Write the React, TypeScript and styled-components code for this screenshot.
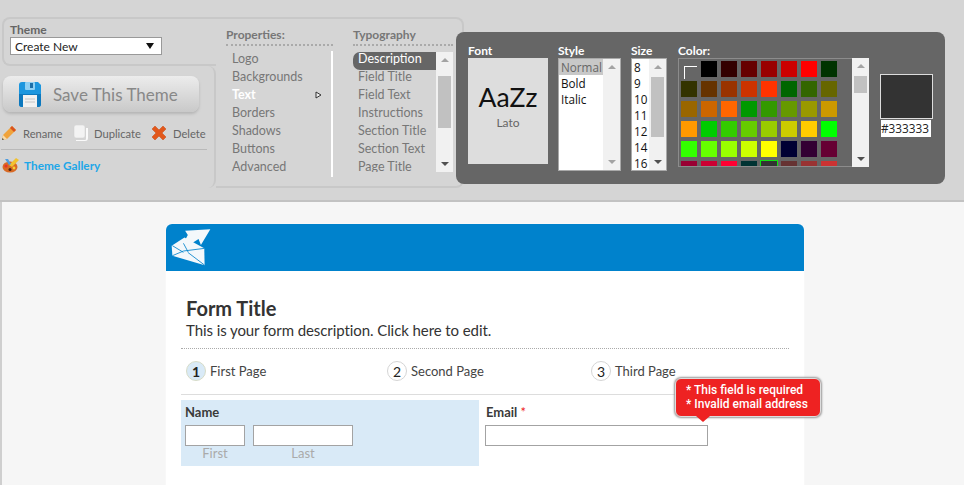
import React from "react";
import styled, { createGlobalStyle } from "styled-components";

const GlobalStyle = createGlobalStyle`
  html, body {
    margin: 0;
    padding: 0;
    height: 485px;
    overflow: hidden;
    background: #f6f6f6;
    font-family: "Lato", "Noto Sans", sans-serif;
  }
`;

const Toolbar = styled.div`
  display: flex;
  align-items: flex-start;
  box-sizing: border-box;
  height: 202px;
  padding: 17px 0 0 2px;
  background: #d5d5d5;
  border-bottom: 2px solid #c2c2c2;
`;

const LeftColumn = styled.div`
  width: 214px;
  flex: none;
`;

const ThemeBox = styled.div`
  box-sizing: border-box;
  height: 49px;
  padding: 4px 6px;
  border: 2px solid #c8c8c8;
  border-right: none;
  border-radius: 8px 0 0 8px;
`;

const ThemeLabel = styled.div`
  font-size: 12px;
  line-height: 13px;
  font-weight: 700;
  color: #666;
`;

const ThemeSelect = styled.div`
  display: flex;
  align-items: center;
  justify-content: space-between;
  box-sizing: border-box;
  width: 152px;
  height: 18px;
  margin-top: 1px;
  padding: 0 7px 0 4px;
  background: #fff;
  border: 1px solid #999;
  font-size: 12px;
  color: #222;
`;

const SelectArrow = styled.span`
  width: 0;
  height: 0;
  border-left: 4px solid transparent;
  border-right: 4px solid transparent;
  border-top: 6px solid #111;
`;

const SaveBox = styled.div`
  box-sizing: border-box;
  height: 122px;
  padding-top: 10px;
  border-right: 2px solid #c8c8c8;
  border-radius: 0 8px 8px 0;
`;

const SaveButton = styled.div`
  display: flex;
  align-items: center;
  box-sizing: border-box;
  width: 196px;
  height: 36px;
  margin-left: 1px;
  padding-left: 16px;
  gap: 12px;
  border-radius: 8px;
  background: linear-gradient(#ececec, #c9c9c9);
  box-shadow: 0 2px 3px #b5b5b5;
  font-size: 17px;
  color: #888;
`;

const ActionRow = styled.div`
  display: flex;
  align-items: center;
  width: 206px;
  height: 38px;
  margin-left: -1px;
  padding-top: 5px;
  box-sizing: border-box;
  border-bottom: 1px solid #b9b9b9;
`;

const ActionLink = styled.span<{ $width: number }>`
  display: flex;
  align-items: center;
  gap: 6px;
  width: ${(p) => p.$width}px;
  font-size: 11.2px;
  color: #666;
`;

const GalleryLink = styled.div`
  display: flex;
  align-items: center;
  gap: 4px;
  margin: 7px 0 0;
  font-size: 11.8px;
  font-weight: 700;
  color: #1ea7e8;
`;

const PropsPanel = styled.div`
  display: flex;
  gap: 20px;
  flex: none;
  box-sizing: border-box;
  width: 248px;
  height: 171px;
  padding: 8px 0 0 10px;
  border: 2px solid #c8c8c8;
  border-left: none;
  border-radius: 0 8px 8px 0;
`;

const PropsColumn = styled.div<{ $width: number }>`
  width: ${(p) => p.$width}px;
  flex: none;
`;

const ColumnTitle = styled.div`
  height: 15px;
  padding-bottom: 2px;
  border-bottom: 2px dotted #aaa;
  font-size: 12px;
  line-height: 15px;
  font-weight: 700;
  color: #777;
`;

const PropList = styled.div`
  box-sizing: border-box;
  height: 126px;
  margin-top: 5px;
  border-right: 2px solid #fff;
`;

const PropItem = styled.div<{ $active?: boolean }>`
  display: flex;
  align-items: center;
  justify-content: space-between;
  height: 18px;
  padding: 0 9px 3px 6px;
  box-sizing: border-box;
  font-size: 12.5px;
  font-weight: ${(p) => (p.$active ? 700 : 400)};
  color: ${(p) => (p.$active ? "#fff" : "#777")};
`;

const TypoBox = styled.div`
  display: flex;
  height: 120px;
  margin-top: 6px;
  overflow: hidden;
`;

const TypoList = styled.div`
  flex: 1;
  overflow: hidden;
`;

const TypoItem = styled.div<{ $active?: boolean }>`
  height: 18px;
  padding-left: 5px;
  box-sizing: border-box;
  font-size: 12.5px;
  line-height: 14px;
  color: ${(p) => (p.$active ? "#fff" : "#777")};
  background: ${(p) => (p.$active ? "#666" : "transparent")};
  border-radius: ${(p) => (p.$active ? "7px 0 0 7px" : "0")};
`;

const Track = styled.div`
  display: flex;
  flex-direction: column;
  flex: none;
  width: 17px;
  box-sizing: border-box;
  background: #f1f1f1;
`;

const TrackMiddle = styled.div<{ $offset: number }>`
  flex: 1;
  padding: ${(p) => p.$offset}px 2px 0;
`;

const Thumb = styled.div<{ $height: number }>`
  height: ${(p) => p.$height}px;
  background: #c1c1c1;
`;

const ArrowCell = styled.div`
  display: flex;
  align-items: center;
  justify-content: center;
  height: 16px;
  flex: none;
`;

const ArrowGlyph = styled.span<{ $down?: boolean; $muted?: boolean }>`
  width: 0;
  height: 0;
  border-left: 4px solid transparent;
  border-right: 4px solid transparent;
  ${(p) =>
    p.$down
      ? `border-top: 4px solid ${p.$muted ? "#a3a3a3" : "#505050"};`
      : `border-bottom: 4px solid ${p.$muted ? "#a3a3a3" : "#505050"};`}
`;

const DarkPanel = styled.div`
  display: flex;
  flex: none;
  box-sizing: border-box;
  width: 489px;
  height: 152px;
  margin: 15px 0 0 -8px;
  padding: 12px 12px 0;
  background: #666;
  border-radius: 8px;
`;

const DarkColumn = styled.div<{ $width: number; $gap: number }>`
  width: ${(p) => p.$width}px;
  margin-right: ${(p) => p.$gap}px;
  flex: none;
`;

const DarkLabel = styled.div`
  height: 14px;
  font-size: 12px;
  line-height: 14px;
  font-weight: 700;
  color: #fff;
`;

const FontPreview = styled.div`
  display: flex;
  flex-direction: column;
  align-items: center;
  box-sizing: border-box;
  height: 106px;
  padding-top: 24px;
  background: #ddd;
`;

const PreviewSample = styled.div`
  font-size: 26.5px;
  line-height: 30px;
  color: #111;
`;

const PreviewName = styled.div`
  margin-top: 3px;
  font-size: 12px;
  line-height: 15px;
  color: #666;
`;

const ListBox = styled.div`
  display: flex;
  box-sizing: border-box;
  height: 113px;
  background: #fff;
  border: 1px solid #a9a9a9;
  overflow: hidden;
`;

const Options = styled.div`
  flex: 1;
  min-width: 0;
  overflow: hidden;
`;

const Option = styled.div<{ $selected?: boolean }>`
  height: 16px;
  padding-left: 2px;
  font-family: "Open Sans", "Noto Sans", sans-serif;
  font-size: 11.7px;
  line-height: 16px;
  color: ${(p) => (p.$selected ? "#666" : "#111")};
  background: ${(p) => (p.$selected ? "#c8c8c8" : "transparent")};
`;

const ColorWrap = styled.div`
  display: flex;
  height: 109px;
  width: 191px;
`;

const ColorGrid = styled.div`
  display: grid;
  grid-template-columns: repeat(8, 16px);
  grid-auto-rows: 16px;
  gap: 4px;
  flex: 1;
  box-sizing: border-box;
  padding: 2px 0 0 2px;
  border: 1px solid #8c8c8c;
  border-right: none;
  overflow: hidden;
`;

const ColorCell = styled.div<{ $color: string; $selected?: boolean }>`
  box-sizing: border-box;
  background: ${(p) => p.$color};
  ${(p) => (p.$selected ? "outline: 1px solid #12e012;" : "")}
`;

const EmptyCell = styled.div`
  position: relative;
  &::before {
    content: "";
    position: absolute;
    right: 0;
    top: 5px;
    width: 12px;
    height: 12px;
    border-left: 1px solid #fff;
    border-top: 1px solid #fff;
  }
`;

const SwatchColumn = styled.div`
  width: 53px;
  flex: none;
  margin: 30px 0 0 11px;
`;

const Swatch = styled.div`
  box-sizing: border-box;
  height: 45px;
  background: #333;
  border: 1px solid #ddd;
`;

const HexBox = styled.div`
  width: 50px;
  height: 17px;
  margin: 1px 0 0 1px;
  background: #fff;
  font-family: "Open Sans", sans-serif;
  font-size: 11.8px;
  line-height: 17px;
  color: #222;
  white-space: nowrap;
  overflow: hidden;
`;

const Stage = styled.div`
  height: 283px;
  box-sizing: border-box;
  padding: 22px 0 0 164px;
  border-left: 2px solid #cfcfcf;
`;

const Form = styled.div`
  position: relative;
  width: 638px;
  height: 270px;
  background: #fff;
  border-radius: 6px 6px 0 0;
  box-shadow: 0 0 2px #fff;
`;

const FormHeader = styled.div`
  display: flex;
  align-items: center;
  box-sizing: border-box;
  height: 47px;
  padding-left: 4px;
  background: #0082cc;
  border-radius: 6px 6px 0 0;
`;

const FormBody = styled.div`
  padding: 25px 15px 0;
`;

const TitleBlock = styled.div`
  padding: 0 0 9px 5px;
  border-bottom: 1px dotted #aaa;
`;

const FormTitle = styled.div`
  font-size: 20px;
  line-height: 25px;
  font-weight: 700;
  color: #333;
`;

const FormDescription = styled.div`
  font-size: 15px;
  line-height: 18px;
  letter-spacing: -0.08px;
  color: #333;
`;

const Steps = styled.div`
  display: grid;
  grid-template-columns: 201px 204px 1fr;
  align-items: center;
  box-sizing: border-box;
  height: 46px;
  padding: 0 0 1px 5px;
  border-bottom: 1px solid #ddd;
`;

const Step = styled.div`
  display: flex;
  align-items: center;
  gap: 4px;
  font-size: 13px;
  color: #444;
`;

const StepNumber = styled.span<{ $current?: boolean }>`
  display: flex;
  align-items: center;
  justify-content: center;
  box-sizing: border-box;
  width: 20px;
  height: 20px;
  border-radius: 50%;
  border: 1px solid ${(p) => (p.$current ? "#d7dcc8" : "#d5d5d5")};
  background: ${(p) => (p.$current ? "#d9eaf7" : "#fff")};
  font-size: 14px;
  font-weight: ${(p) => (p.$current ? 700 : 400)};
  color: #222;
`;

const FieldRow = styled.div`
  display: flex;
  margin-top: 5px;
`;

const NameField = styled.div`
  box-sizing: border-box;
  width: 298px;
  height: 66px;
  padding: 4px;
  background: #d9eaf7;
`;

const EmailField = styled.div`
  margin-left: 6px;
  padding-top: 4px;
`;

const FieldLabel = styled.div<{ $indent?: number }>`
  padding-left: ${(p) => p.$indent ?? 0}px;
  height: 16px;
  font-size: 13px;
  line-height: 16px;
  font-weight: 700;
  color: #3a3a3a;
`;

const Required = styled.span`
  color: #ee2222;
  font-weight: 400;
`;

const NameInputs = styled.div`
  display: flex;
  gap: 8px;
  margin-top: 5px;
`;

const NamePart = styled.div<{ $width: number }>`
  width: ${(p) => p.$width}px;
  text-align: center;
  font-size: 13px;
  line-height: 15px;
  color: #aaa;
`;

const TextInput = styled.div<{ $width: number }>`
  box-sizing: border-box;
  width: ${(p) => p.$width}px;
  height: 21px;
  background: #fff;
  border: 1px solid #a3a3a3;
`;

const ErrorBubble = styled.div`
  position: absolute;
  left: 509px;
  top: 154px;
  box-sizing: border-box;
  width: 146px;
  height: 39px;
  padding: 4px 0 0 10px;
  background: #ee2222;
  border: 1px solid #ddd;
  border-radius: 6px;
  box-shadow: 0 0 2px 1px #999;
  font-family: "Roboto", "Liberation Sans", sans-serif;
  font-size: 12px;
  line-height: 14px;
  font-weight: 500;
  color: #fff;
  white-space: nowrap;
  &::after {
    content: "";
    position: absolute;
    left: 20px;
    bottom: -6px;
    border-left: 7px solid transparent;
    border-right: 7px solid transparent;
    border-top: 6px solid #ee2222;
  }
`;

const properties = ["Logo", "Backgrounds", "Text", "Borders", "Shadows", "Buttons", "Advanced"];
const typography = [
  "Description",
  "Field Title",
  "Field Text",
  "Instructions",
  "Section Title",
  "Section Text",
  "Page Title",
];
const sizes = ["8", "9", "10", "11", "12", "14", "16"];
const colors = [
  "#000000", "#330000", "#660000", "#990000", "#cc0000", "#ff0000", "#003300",
  "#333300", "#663300", "#993300", "#cc3300", "#ff3300", "#006600", "#336600", "#666600",
  "#996600", "#cc6600", "#ff6600", "#009900", "#339900", "#669900", "#999900", "#cc9900",
  "#ff9900", "#00cc00", "#33cc00", "#66cc00", "#99cc00", "#cccc00", "#ffcc00", "#00ff00",
  "#33ff00", "#66ff00", "#99ff00", "#ccff00", "#ffff00", "#000033", "#330033", "#660033",
  "#990033", "#cc0033", "#ff0033", "#003333", "#333333", "#663333", "#993333", "#cc3333",
];

const Scrollbar = ({ offset = 0, thumb = 0, muted = false }: { offset?: number; thumb?: number; muted?: boolean }) => (
  <Track>
    <ArrowCell>
      <ArrowGlyph $muted={muted || offset < 10} />
    </ArrowCell>
    <TrackMiddle $offset={offset}>{thumb > 0 && <Thumb $height={thumb} />}</TrackMiddle>
    <ArrowCell>
      <ArrowGlyph $down $muted={muted} />
    </ArrowCell>
  </Track>
);

const FloppyIcon = () => (
  <svg width="22" height="25" viewBox="0 0 22 25">
    <path d="M3 0h16l3 3v19a3 3 0 0 1-3 3H3a3 3 0 0 1-3-3V3a3 3 0 0 1 3-3z" fill="#1c96de" />
    <path d="M0 12h22v10a3 3 0 0 1-3 3H3a3 3 0 0 1-3-3z" fill="#0d78bd" />
    <rect x="6" y="0" width="10" height="8" rx="1" fill="#8fd0f3" />
    <rect x="11" y="1" width="3" height="5" fill="#1c6fa8" />
    <rect x="4" y="13" width="14" height="12" fill="#f1f1f1" />
    <path d="M6 17h10M6 20h10" stroke="#c4c4c4" />
  </svg>
);

const PencilIcon = () => (
  <svg width="16" height="16" viewBox="0 0 16 16">
    <path d="M1 15l1-5L11 1l4 4-9 9z" fill="#f0a33c" />
    <path d="M11 1l4 4-2 2-4-4z" fill="#d9531e" />
    <path d="M1 15l1-5 4 4z" fill="#f6dcae" />
    <path d="M1 15l.5-2 1.5 1.5z" fill="#444" />
  </svg>
);

const DuplicateIcon = () => (
  <svg width="15" height="16" viewBox="0 0 15 16">
    <path d="M13 3h2v10a3 3 0 0 1-3 3H3v-1h9a1 1 0 0 0 1-1z" fill="#fafafa" />
    <rect x="1" y="0" width="11" height="13" rx="2" fill="#f3f3f3" stroke="#cfcfcf" strokeWidth="0.5" />
  </svg>
);

const DeleteIcon = () => (
  <svg width="16" height="16" viewBox="0 0 16 16">
    <path d="M1 4l3-3 4 4 4-4 3 3-4 4 4 4-3 3-4-4-4 4-3-3 4-4z" fill="#e2581c" stroke="#c9490f" strokeWidth="0.5" strokeLinejoin="round" />
  </svg>
);

const PaletteIcon = () => (
  <svg width="18" height="16" viewBox="0 0 18 16">
    <ellipse cx="8" cy="10" rx="7.5" ry="5.5" fill="#d96a25" />
    <circle cx="4" cy="9" r="1.6" fill="#e8322a" />
    <circle cx="8" cy="12.5" r="1.5" fill="#4a2a12" />
    <circle cx="12" cy="11" r="1.4" fill="#f6d232" />
    <path d="M7 8l7-7 3 2-7 7z" fill="#f2c230" />
    <path d="M3 2l3 0 3 5-2 1z" fill="#4f9de0" />
  </svg>
);

const TextArrowIcon = () => (
  <svg width="7" height="8" viewBox="0 0 7 8">
    <path d="M1 1l5 3-5 3z" fill="#eee" stroke="#333" />
  </svg>
);

const LogoIcon = () => (
  <svg width="42" height="39" viewBox="45 40 125 115">
    <path d="M50 92L88 68l59 32 1 50-96-28z" fill="#f4f8fb" />
    <path d="M85 85L98 60 90 48l75-5-28 47-7-18-20 13z" fill="#f4f8fb" />
    <path d="M52 92l33 20M52 122l33-14 63-8M98 112l50 38M85 85l14 26" stroke="#0082cc" strokeWidth="2.5" fill="none" />
  </svg>
);

const App = () => {
  return (
    <>
      <GlobalStyle />
      <Toolbar>
        <LeftColumn>
          <ThemeBox>
            <ThemeLabel>Theme</ThemeLabel>
            <ThemeSelect>
              Create New
              <SelectArrow />
            </ThemeSelect>
          </ThemeBox>
          <SaveBox>
            <SaveButton>
              <FloppyIcon />
              Save This Theme
            </SaveButton>
            <ActionRow>
              <ActionLink $width={72}>
                <PencilIcon />
                Rename
              </ActionLink>
              <ActionLink $width={78}>
                <DuplicateIcon />
                Duplicate
              </ActionLink>
              <ActionLink $width={56}>
                <DeleteIcon />
                Delete
              </ActionLink>
            </ActionRow>
            <GalleryLink>
              <PaletteIcon />
              Theme Gallery
            </GalleryLink>
          </SaveBox>
        </LeftColumn>

        <PropsPanel>
          <PropsColumn $width={107}>
            <ColumnTitle>Properties:</ColumnTitle>
            <PropList>
              {properties.map((item) => (
                <PropItem key={item} $active={item === "Text"}>
                  {item}
                  {item === "Text" && <TextArrowIcon />}
                </PropItem>
              ))}
            </PropList>
          </PropsColumn>
          <PropsColumn $width={100}>
            <ColumnTitle>Typography</ColumnTitle>
            <TypoBox>
              <TypoList>
                {typography.map((item, i) => (
                  <TypoItem key={item} $active={i === 0}>
                    {item}
                  </TypoItem>
                ))}
              </TypoList>
              <Scrollbar offset={8} thumb={52} />
            </TypoBox>
          </PropsColumn>
        </PropsPanel>

        <DarkPanel>
          <DarkColumn $width={80} $gap={10}>
            <DarkLabel>Font</DarkLabel>
            <FontPreview>
              <PreviewSample>AaZz</PreviewSample>
              <PreviewName>Lato</PreviewName>
            </FontPreview>
          </DarkColumn>
          <DarkColumn $width={63} $gap={10}>
            <DarkLabel>Style</DarkLabel>
            <ListBox>
              <Options>
                <Option $selected>Normal</Option>
                <Option>Bold</Option>
                <Option>Italic</Option>
              </Options>
              <Scrollbar muted />
            </ListBox>
          </DarkColumn>
          <DarkColumn $width={36} $gap={11}>
            <DarkLabel>Size</DarkLabel>
            <ListBox>
              <Options>
                {sizes.map((s) => (
                  <Option key={s}>{s}</Option>
                ))}
              </Options>
              <Scrollbar offset={2} thumb={60} />
            </ListBox>
          </DarkColumn>
          <DarkColumn $width={191} $gap={0}>
            <DarkLabel>Color:</DarkLabel>
            <ColorWrap>
              <ColorGrid>
                <EmptyCell />
                {colors.map((c) => (
                  <ColorCell key={c} $color={c} $selected={c === "#333333"} />
                ))}
              </ColorGrid>
              <Scrollbar offset={2} thumb={17} />
            </ColorWrap>
          </DarkColumn>
          <SwatchColumn>
            <Swatch />
            <HexBox>#333333</HexBox>
          </SwatchColumn>
        </DarkPanel>
      </Toolbar>

      <Stage>
        <Form>
          <FormHeader>
            <LogoIcon />
          </FormHeader>
          <FormBody>
            <TitleBlock>
              <FormTitle>Form Title</FormTitle>
              <FormDescription>This is your form description. Click here to edit.</FormDescription>
            </TitleBlock>
            <Steps>
              <Step>
                <StepNumber $current>1</StepNumber>
                First Page
              </Step>
              <Step>
                <StepNumber>2</StepNumber>
                Second Page
              </Step>
              <Step>
                <StepNumber>3</StepNumber>
                Third Page
              </Step>
            </Steps>
            <FieldRow>
              <NameField>
                <FieldLabel>Name</FieldLabel>
                <NameInputs>
                  <NamePart $width={60}>
                    <TextInput $width={60} />
                    First
                  </NamePart>
                  <NamePart $width={100}>
                    <TextInput $width={100} />
                    Last
                  </NamePart>
                </NameInputs>
              </NameField>
              <EmailField>
                <FieldLabel $indent={1}>
                  Email <Required>*</Required>
                </FieldLabel>
                <NameInputs>
                  <TextInput $width={223} />
                </NameInputs>
              </EmailField>
            </FieldRow>
          </FormBody>
          <ErrorBubble>
            * This field is required
            <br />* Invalid email address
          </ErrorBubble>
        </Form>
      </Stage>
    </>
  );
};

export default App;
